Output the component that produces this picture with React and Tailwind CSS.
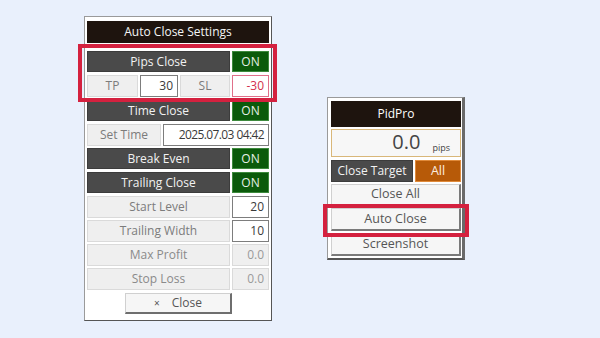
import React from "react";

const font = { fontFamily: '"Open Sans", "Noto Sans", sans-serif' };

function Dark({ children, className = "" }) {
  return (
    <div className={"flex items-center justify-center bg-[#4a4a4a] border border-[#3c3c3c] text-[#f2f2f2] text-[12px] " + className}>
      {children}
    </div>
  );
}
function On({ className = "" }) {
  return (
    <div className={"flex items-center justify-center bg-[#0b5a0b] border border-[#3d8a3d] text-[#e6efe6] text-[12px] " + className}>
      ON
    </div>
  );
}
function Label({ children, className = "" }) {
  return (
    <div className={"flex items-center justify-center bg-[#efefef] border border-[#dadada] text-[#7c7c7c] text-[12px] " + className}>
      {children}
    </div>
  );
}
function Input({ children, className = "" }) {
  return (
    <div className={"flex items-center justify-end pr-[4px] bg-white border border-[#7d7d7d] text-[#3a3a3a] text-[12px] " + className}>
      {children}
    </div>
  );
}

function Row({ children, className = "" }) {
  return <div className={"flex gap-[2px] " + className}>{children}</div>;
}

export default function App() {
  return (
    <div
      className="relative w-[600px] h-[338px] bg-[#e9f0fc] flex items-start pl-[84px] pt-[16px] text-[11px] leading-none"
      style={font}
    >
      {/* Left panel */}
      <div className="w-[188px] h-[305px] bg-white border border-[#9a9a9a] border-r-[#555] border-b-[#555] px-[2px] pt-[4px] flex flex-col">
        <div className="h-[22px] bg-[#1e140e] text-[#f4f4f4] flex items-center justify-center text-[12px]">
          Auto Close Settings
        </div>
        <Row className="h-[21px] mt-[8px]">
          <Dark className="w-[143px]">Pips Close</Dark>
          <On className="flex-1" />
        </Row>
        <Row className="h-[22px] mt-[3px]">
          <Label className="w-[51px]">TP</Label>
          <Input className="w-[38px]">30</Input>
          <Label className="w-[50px]">SL</Label>
          <div className="flex-1 flex items-center justify-end pr-[4px] bg-white border border-[#e0708a] text-[#d22f4c] text-[12px]">
            -30
          </div>
        </Row>
        <Row className="h-[21px] mt-[3px]">
          <Dark className="w-[143px]">Time Close</Dark>
          <On className="flex-1" />
        </Row>
        <Row className="h-[22px] mt-[3px]">
          <Label className="w-[74px]">Set Time</Label>
          <Input className="flex-1 tracking-[-0.6px]">2025.07.03 04:42</Input>
        </Row>
        <Row className="h-[21px] mt-[2px]">
          <Dark className="w-[143px]">Break Even</Dark>
          <On className="flex-1" />
        </Row>
        <Row className="h-[21px] mt-[3px]">
          <Dark className="w-[143px]">Trailing Close</Dark>
          <On className="flex-1" />
        </Row>
        <Row className="h-[22px] mt-[3px]">
          <Label className="w-[143px]">Start Level</Label>
          <Input className="flex-1">20</Input>
        </Row>
        <Row className="h-[22px] mt-[2px]">
          <Label className="w-[143px]">Trailing Width</Label>
          <Input className="flex-1">10</Input>
        </Row>
        <Row className="h-[22px] mt-[2px]">
          <Label className="w-[143px] text-[#8a8a8a]">Max Profit</Label>
          <div className="flex-1 flex items-center justify-end pr-[4px] bg-[#efefef] border border-[#dadada] text-[#9a9a9a] text-[12px]">0.0</div>
        </Row>
        <Row className="h-[22px] mt-[2px]">
          <Label className="w-[143px] text-[#8a8a8a]">Stop Loss</Label>
          <div className="flex-1 flex items-center justify-end pr-[4px] bg-[#efefef] border border-[#dadada] text-[#9a9a9a] text-[12px]">0.0</div>
        </Row>
        <div className="h-[21px] mt-[3px] ml-[38px] w-[107px] flex items-center justify-center bg-[#f6f6f6] border border-[#d0d0d0] border-r-[2px] border-b-[2px] border-r-[#6e6e6e] border-b-[#6e6e6e] text-[#555] text-[12px]">
          <span className="mr-[12px] text-[10px]">×</span>Close
        </div>
      </div>

      {/* Right panel */}
      <div className="ml-[55px] mt-[81px] w-[138px] bg-white border border-[#9a9a9a] border-r-[3px] border-b-[2px] border-r-[#6a6a6a] border-b-[#555] pl-[3px] pr-[1px] pt-[3px] pb-[2px] flex flex-col">
        <div className="h-[26px] bg-[#1e140e] text-white flex items-center justify-center text-[12px]">PidPro</div>
        <div className="h-[28px] mt-[2px] bg-[#f7f7f7] border border-[#d9b779] flex items-end justify-end pr-[10px] pb-[4px] text-[#444]">
          <span className="text-[20px] leading-none mr-[12px]">0.0</span>
          <span className="text-[9px] leading-none">pips</span>
        </div>
        <Row className="h-[22px] mt-[3px]">
          <Dark className="w-[82px] text-[12.5px]">Close Target</Dark>
          <div className="flex-1 flex items-center justify-center bg-[#b75a08] border border-[#e08a3a] text-[#fbeee0] text-[12.5px]">All</div>
        </Row>
        {[
          ["Close All", "h-[22px] mt-[2px]"],
          ["Auto Close", "h-[23px] mt-[2px]"],
          ["Screenshot", "h-[22px] mt-[3px]"],
        ].map(([t, c]) => (
          <div
            key={t}
            className={
              "flex items-center justify-center bg-[#f6f6f6] border border-[#d0d0d0] border-r-[2px] border-b-[2px] border-r-[#7a7a7a] border-b-[#7a7a7a] text-[#555] text-[12.5px] " +
              c
            }
          >
            {t}
          </div>
        ))}
      </div>

      {/* Highlights */}
      <div className="absolute left-[78px] top-[44px] w-[199px] h-[58px] border-[4px] border-[#d4213f] pointer-events-none" />
      <div className="absolute left-[323px] top-[204px] w-[146px] h-[33px] border-[4px] border-[#d4213f] pointer-events-none" />
    </div>
  );
}
